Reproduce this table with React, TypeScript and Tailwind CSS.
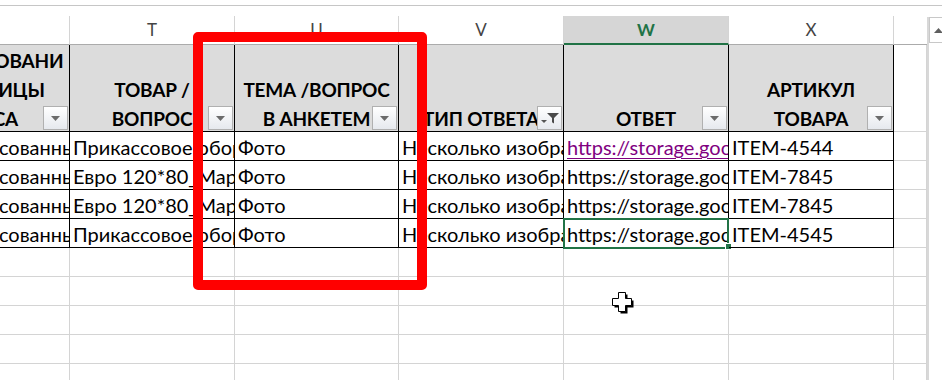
import type { ReactNode } from 'react';

// sheet columns: partial S, T, U, V, W, X and a sliver of Y (widths include the right gridline)
const GRID = 'grid grid-cols-[70px_165px_164px_165px_165px_165px_33px]';
const LETTERS = ['', 'T', 'U', 'V', 'W', 'X', ''];

type Row = { s: string; t: string; u: string; v: string; w: string; x: string; visited?: boolean };

const ROWS: Row[] = [
  { s: 'Несогласованные стойки', t: 'Прикассовое оборудование', u: 'Фото', v: 'Несколько изображений', w: 'https://storage.googleapis.com/photo/4544', x: 'ITEM-4544', visited: true },
  { s: 'Несогласованные стойки', t: 'Евро 120*80_Маркетинг', u: 'Фото', v: 'Несколько изображений', w: 'https://storage.googleapis.com/photo/7845', x: 'ITEM-7845' },
  { s: 'Несогласованные стойки', t: 'Евро 120*80_Маркетинг', u: 'Фото', v: 'Несколько изображений', w: 'https://storage.googleapis.com/photo/7846', x: 'ITEM-7845' },
  { s: 'Несогласованные стойки', t: 'Прикассовое оборудование', u: 'Фото', v: 'Несколько изображений', w: 'https://storage.googleapis.com/photo/4545', x: 'ITEM-4545' },
];

function FilterButton({ active }: { active?: boolean }) {
  return (
    <span className="absolute bottom-px right-px flex h-[24px] w-[25px] items-center justify-center border border-[#b0b0b0] bg-gradient-to-b from-white to-[#e6e9ee]">
      {active ? (
        <svg width="20" height="14" viewBox="0 0 20 14">
          <path d="M1 9h6l-3 3z" fill="#555" />
          <path d="M7 2h12l-5 5v5.5l-2-1.3V7z" fill="#4a4a4a" />
        </svg>
      ) : (
        <svg width="9" height="5" viewBox="0 0 9 5">
          <path d="M0 0h9L4.5 5z" fill="#6b6b6b" />
        </svg>
      )}
    </span>
  );
}

function HeadCell({ lines, active, className = '' }: { lines: string[]; active?: boolean; className?: string }) {
  return (
    <div className={`relative flex h-[87px] items-end justify-center overflow-hidden border-r border-b border-black bg-[#dcdcdc] ${className}`}>
      <div className="-mb-[2px] text-center text-[19px] leading-[29px] font-bold tracking-[-0.2px] whitespace-nowrap text-black">
        {lines.map((l) => (
          <div key={l}>{l}</div>
        ))}
      </div>
      <FilterButton active={active} />
    </div>
  );
}

function DataCell({ children, className = '', selected }: { children: ReactNode; className?: string; selected?: boolean }) {
  return (
    <div className={`relative flex h-[29px] items-end border-r border-b border-black ${className}`}>
      <div className="w-full overflow-hidden px-[3px] pb-[3px] text-[20px] leading-5 whitespace-nowrap text-black">{children}</div>
      {selected && (
        <>
          <span className="absolute -top-px -right-px -bottom-[2px] -left-px border-2 border-[#217346]" />
          <span className="absolute -right-[4px] -bottom-[3px] h-[7px] w-[7px] border border-white bg-[#217346]" />
        </>
      )}
    </div>
  );
}

function EmptyRow() {
  return (
    <div className={GRID}>
      {LETTERS.map((_, i) => (
        <div key={i} className="h-[29px] border-r border-b border-[#d4d4d4]" />
      ))}
    </div>
  );
}

function ExcelCursor() {
  return (
    <svg className="absolute top-[292px] left-[612px]" width="23" height="23" viewBox="0 0 23 23">
      <path d="M8.5 2.5h7v6h6v7h-6v6h-7v-6h-6v-7h6z" fill="#000" />
      <path d="M6.5 0.5h7v6h6v7h-6v6h-7v-6h-6v-7h6z" fill="#fff" stroke="#000" />
    </svg>
  );
}

export default function App() {
  return (
    <div className="relative h-[380px] w-[942px] overflow-hidden bg-white font-['Lato',sans-serif]">
      {/* formula bar edge */}
      <div className="h-4 pt-[5px]">
        <div className="border-t border-[#c6c6c6]" />
      </div>

      <div className="flex">
        <div className="w-[928px]">
          {/* column letters */}
          <div className={GRID}>
            {LETTERS.map((l, i) =>
              l === 'W' ? (
                <div key={i} className="flex h-[29px] items-center justify-center border-r border-b-2 border-r-[#d4d4d4] border-b-[#217346] bg-[#d6d6d6] text-[17px] font-bold text-[#217346]">
                  {l}
                </div>
              ) : (
                <div key={i} className={`flex h-[29px] items-center justify-center border-b border-b-[#ababab] text-[17px] text-[#444] ${i < 6 ? 'border-r border-r-[#d4d4d4]' : ''}`}>
                  {l}
                </div>
              ),
            )}
          </div>

          {/* table header */}
          <div className={GRID}>
            <div className="relative h-[87px] overflow-hidden border-r border-b border-black bg-[#dcdcdc]">
              <div className="-ml-[96px] flex h-full w-[165px] flex-col items-center justify-end">
                <div className="-mb-[2px] text-center text-[19px] leading-[29px] font-bold tracking-[-0.2px] whitespace-nowrap text-black">
                  <div>НАИМЕНОВАНИ</div>
                  <div>Е ЕДИНИЦЫ</div>
                  <div>КАССА</div>
                </div>
              </div>
              <FilterButton />
            </div>
            <HeadCell lines={['ТОВАР /', 'ВОПРОС']} />
            <HeadCell lines={['ТЕМА /ВОПРОС', 'В АНКЕТЕМ']} />
            <HeadCell lines={['ТИП ОТВЕТА']} active />
            <HeadCell lines={['ОТВЕТ']} />
            <HeadCell lines={['АРТИКУЛ', 'ТОВАРА']} />
            <div className="h-[87px] border-r border-b border-[#d4d4d4]" />
          </div>

          {/* table body */}
          {ROWS.map((r, i) => (
            <div key={i} className={GRID}>
              <DataCell>
                <div className="-ml-[79px]">{r.s}</div>
              </DataCell>
              <DataCell>{r.t}</DataCell>
              <DataCell>{r.u}</DataCell>
              <DataCell>{r.v}</DataCell>
              <DataCell selected={i === 3}>
                <span className={r.visited ? 'text-[#800080] underline decoration-1 underline-offset-[3px]' : ''}>{r.w}</span>
              </DataCell>
              <DataCell>{r.x}</DataCell>
              <div className="h-[29px] border-r border-b border-[#d4d4d4]" />
            </div>
          ))}

          {[0, 1, 2, 3, 4].map((k) => (
            <EmptyRow key={k} />
          ))}
        </div>

        {/* vertical scrollbar */}
        <div className="mt-px h-[364px] w-[20px] shrink-0 border-l-2 border-[#d8d8d8]">
          <div className="flex h-[26px] items-center justify-center border border-[#c8c8c8] bg-white">
            <svg width="9" height="5" viewBox="0 0 9 5">
              <path d="M0 5h9L4.5 0z" fill="#5f5f5f" />
            </svg>
          </div>
        </div>
      </div>

      {/* highlight frame */}
      <div className="absolute top-[32px] left-[193px] h-[258px] w-[234px] rounded-[5px] border-[10px] border-[#ff0000]" />
      <ExcelCursor />
    </div>
  );
}
